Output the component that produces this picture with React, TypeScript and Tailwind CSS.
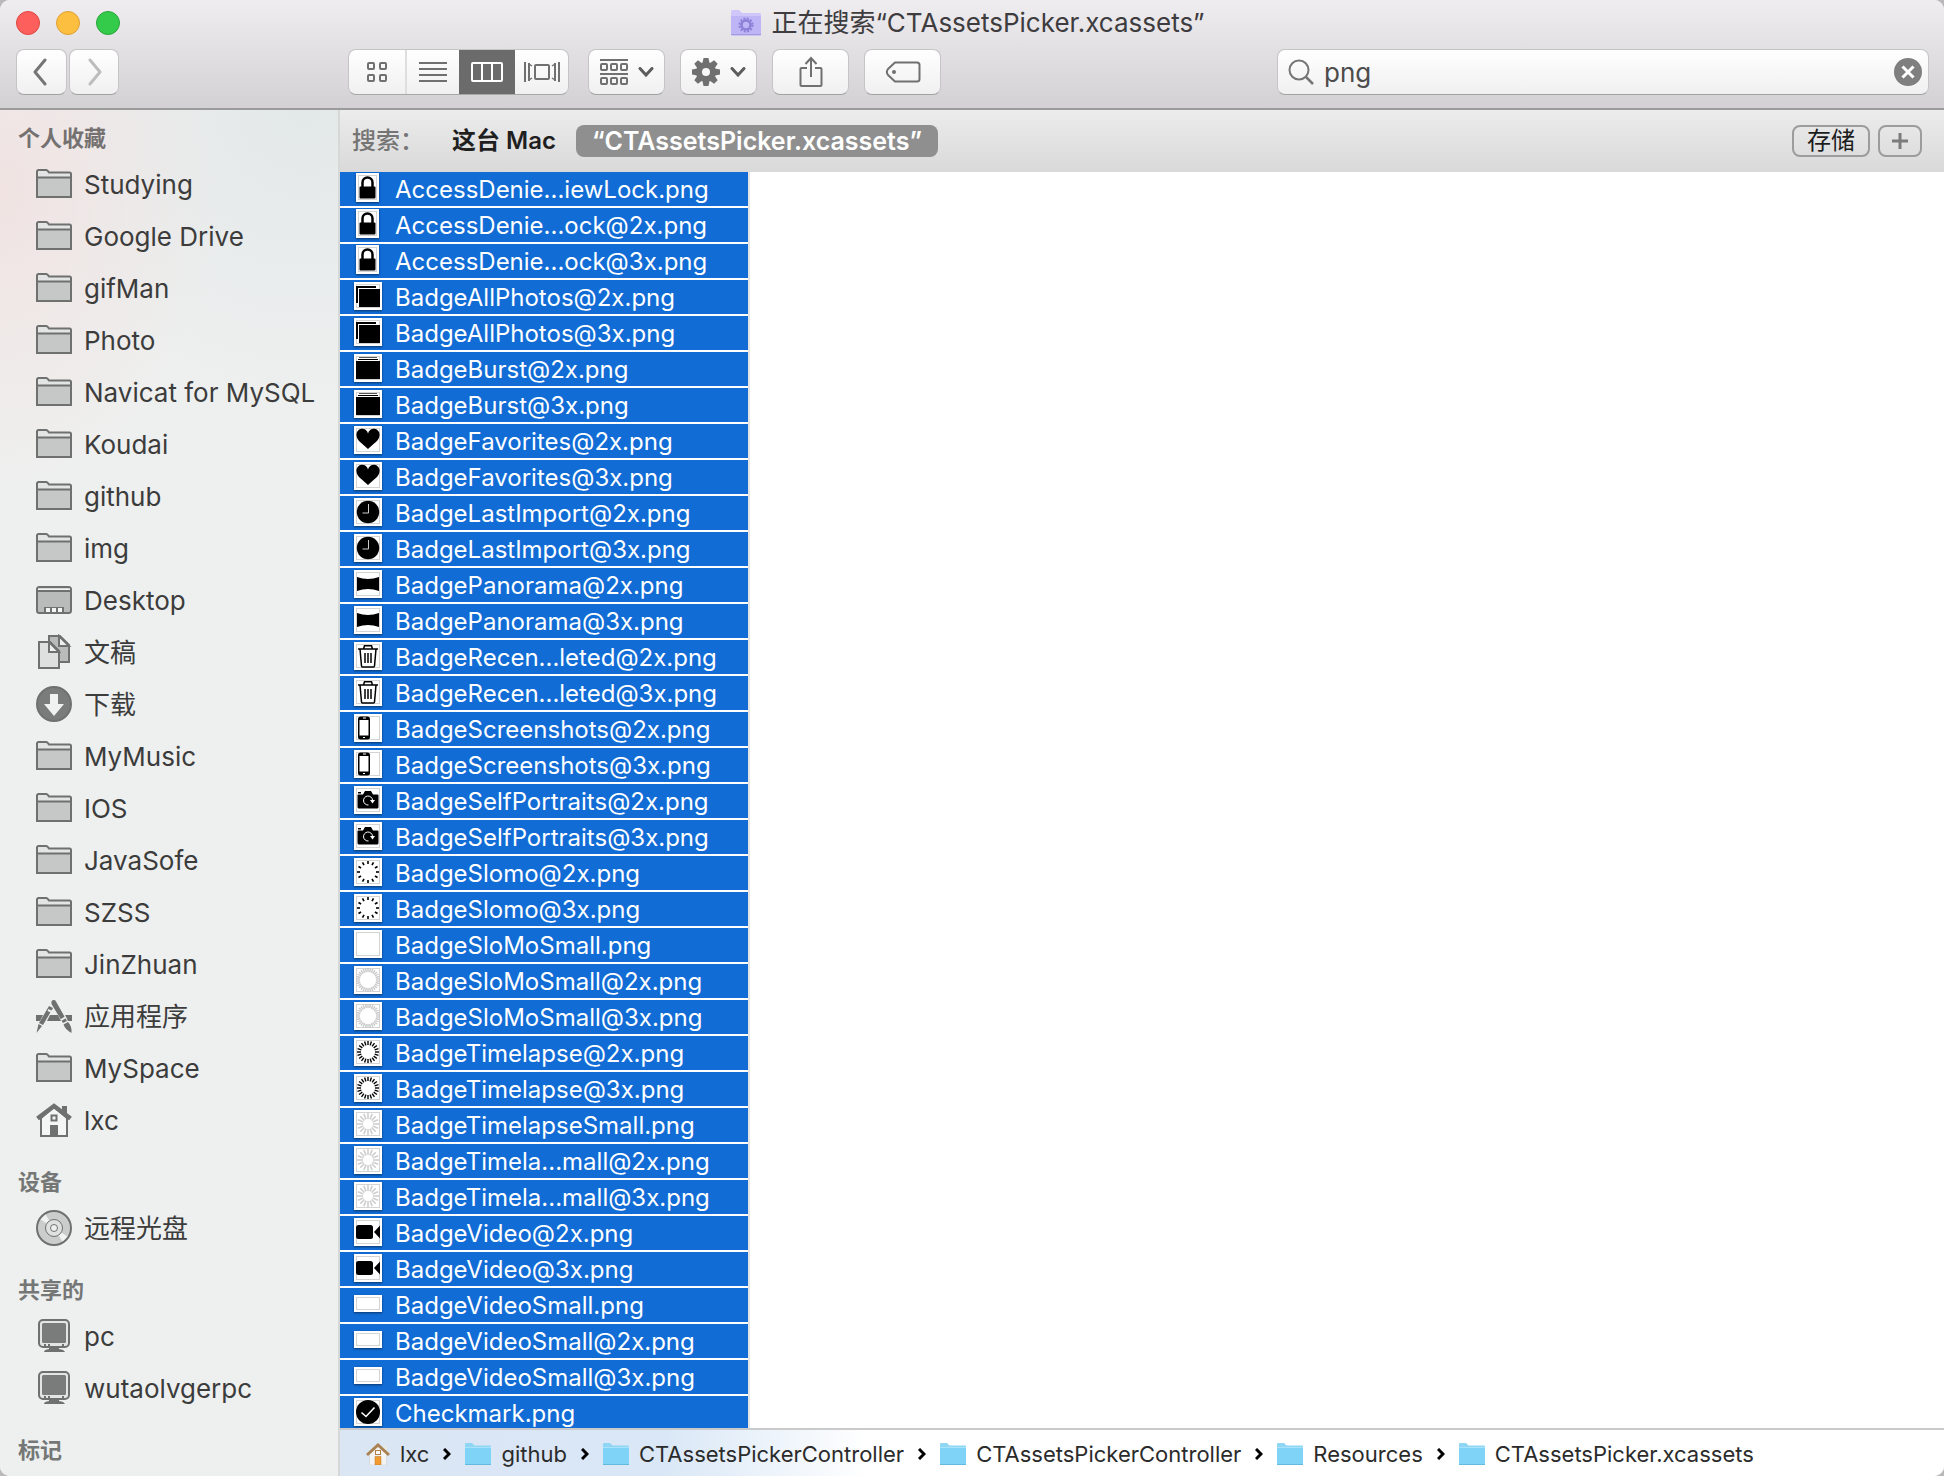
import { ReactNode } from "react";

type IconName =
  | "folder"
  | "desktop"
  | "documents"
  | "downloads"
  | "apps"
  | "home"
  | "disc"
  | "computer";

type ThumbKind =
  | "lock"
  | "allPhotos"
  | "burst"
  | "heart"
  | "clock"
  | "panorama"
  | "trash"
  | "phone"
  | "camera"
  | "slomo"
  | "blank"
  | "slomoSmall"
  | "timelapse"
  | "timelapseSmall"
  | "video"
  | "videoSmall"
  | "check";

const favorites: [string, IconName][] = [
  ["Studying", "folder"],
  ["Google Drive", "folder"],
  ["gifMan", "folder"],
  ["Photo", "folder"],
  ["Navicat for MySQL", "folder"],
  ["Koudai", "folder"],
  ["github", "folder"],
  ["img", "folder"],
  ["Desktop", "desktop"],
  ["文稿", "documents"],
  ["下载", "downloads"],
  ["MyMusic", "folder"],
  ["IOS", "folder"],
  ["JavaSofe", "folder"],
  ["SZSS", "folder"],
  ["JinZhuan", "folder"],
  ["应用程序", "apps"],
  ["MySpace", "folder"],
  ["lxc", "home"],
];

const devices: [string, IconName][] = [["远程光盘", "disc"]];

const shared: [string, IconName][] = [
  ["pc", "computer"],
  ["wutaolvgerpc", "computer"],
];

const files: [string, ThumbKind][] = [
  ["AccessDenie...iewLock.png", "lock"],
  ["AccessDenie...ock@2x.png", "lock"],
  ["AccessDenie...ock@3x.png", "lock"],
  ["BadgeAllPhotos@2x.png", "allPhotos"],
  ["BadgeAllPhotos@3x.png", "allPhotos"],
  ["BadgeBurst@2x.png", "burst"],
  ["BadgeBurst@3x.png", "burst"],
  ["BadgeFavorites@2x.png", "heart"],
  ["BadgeFavorites@3x.png", "heart"],
  ["BadgeLastImport@2x.png", "clock"],
  ["BadgeLastImport@3x.png", "clock"],
  ["BadgePanorama@2x.png", "panorama"],
  ["BadgePanorama@3x.png", "panorama"],
  ["BadgeRecen...leted@2x.png", "trash"],
  ["BadgeRecen...leted@3x.png", "trash"],
  ["BadgeScreenshots@2x.png", "phone"],
  ["BadgeScreenshots@3x.png", "phone"],
  ["BadgeSelfPortraits@2x.png", "camera"],
  ["BadgeSelfPortraits@3x.png", "camera"],
  ["BadgeSlomo@2x.png", "slomo"],
  ["BadgeSlomo@3x.png", "slomo"],
  ["BadgeSloMoSmall.png", "blank"],
  ["BadgeSloMoSmall@2x.png", "slomoSmall"],
  ["BadgeSloMoSmall@3x.png", "slomoSmall"],
  ["BadgeTimelapse@2x.png", "timelapse"],
  ["BadgeTimelapse@3x.png", "timelapse"],
  ["BadgeTimelapseSmall.png", "timelapseSmall"],
  ["BadgeTimela...mall@2x.png", "timelapseSmall"],
  ["BadgeTimela...mall@3x.png", "timelapseSmall"],
  ["BadgeVideo@2x.png", "video"],
  ["BadgeVideo@3x.png", "video"],
  ["BadgeVideoSmall.png", "videoSmall"],
  ["BadgeVideoSmall@2x.png", "videoSmall"],
  ["BadgeVideoSmall@3x.png", "videoSmall"],
  ["Checkmark.png", "check"],
];

const path = [
  "lxc",
  "github",
  "CTAssetsPickerController",
  "CTAssetsPickerController",
  "Resources",
  "CTAssetsPicker.xcassets",
];

export default function App() {
  return (
    <div className="h-screen bg-[#b9b9b9] font-['Inter','Noto_Sans_CJK_SC',sans-serif] text-[#3c3c3c]">
      <div className="flex h-full flex-col overflow-hidden rounded-[10px] bg-white">
        <Toolbar />
        <div className="flex min-h-0 flex-1">
          <Sidebar />
          <main className="flex min-w-0 flex-1 flex-col">
            <ScopeBar />
            <ul
              role="listbox"
              aria-multiselectable="true"
              aria-label="CTAssetsPicker.xcassets"
              className="min-h-0 w-[410px] flex-1 overflow-hidden border-r-2 border-[#e4e4e4]"
            >
              {files.map(([name, kind]) => (
                <li
                  key={name}
                  role="option"
                  aria-selected="true"
                  className="flex h-9 items-start border-b-2 border-white bg-[#116cd6] pl-3.5 text-2xl text-white"
                >
                  <Thumb kind={kind} />
                  <span className="ml-[13px] leading-9">{name}</span>
                </li>
              ))}
            </ul>
            <PathBar />
          </main>
        </div>
      </div>
    </div>
  );
}

const Toolbar = () => (
  <header className="shrink-0 border-b-2 border-[#9b9b9b] bg-linear-to-b from-[#efedf0] to-[#d3d1d4]">
    <div className="grid h-[45px] grid-cols-[1fr_auto_1fr] items-center px-4">
      <div className="flex gap-4">
        <button aria-label="关闭" className="size-6 rounded-full border border-[#e0443e] bg-[#fd605c]" />
        <button aria-label="最小化" className="size-6 rounded-full border border-[#dfa034] bg-[#fdbf40]" />
        <button aria-label="缩放" className="size-6 rounded-full border border-[#27a63a] bg-[#34ca4a]" />
      </div>
      <h1 className="flex items-center gap-2.5 pr-2 text-[26px] text-[#3e3c3f]">
        <SmartFolder />
        正在搜索“CTAssetsPicker.xcassets”
      </h1>
    </div>
    <div className="flex items-start pt-1 pr-[15px] pb-[13px] pl-4">
      <div className="flex gap-0.5">
        <ToolButton label="后退" className="w-[51px] pr-1">
          <svg className="h-7 w-4" viewBox="0 0 16 28" fill="none" stroke="#757575" strokeWidth="3">
            <path d="M13 2 3 14l10 12" strokeLinecap="round" strokeLinejoin="round" />
          </svg>
        </ToolButton>
        <ToolButton label="前进" className="w-[50px] pl-0.5">
          <svg className="h-7 w-4" viewBox="0 0 16 28" fill="none" stroke="#bdbdbd" strokeWidth="3">
            <path d="M3 2l10 12L3 26" strokeLinecap="round" strokeLinejoin="round" />
          </svg>
        </ToolButton>
      </div>
      <div className="ml-[229px] flex h-[46px] overflow-hidden rounded-lg border border-[#c6c4c7] border-b-[#a9a7aa] bg-linear-to-b from-white to-[#f0f0f0]">
        <button aria-label="图标" className="flex w-[58px] items-center justify-center border-r-2 border-[#dedede]">
          <svg className="size-5" viewBox="0 0 20 20" fill="none" stroke="#707070" strokeWidth="2">
            <rect x="1" y="1" width="6" height="6" rx="1" />
            <rect x="13" y="1" width="6" height="6" rx="1" />
            <rect x="1" y="13" width="6" height="6" rx="1" />
            <rect x="13" y="13" width="6" height="6" rx="1" />
          </svg>
        </button>
        <button aria-label="列表" className="flex w-[52px] items-center justify-center">
          <svg className="h-5 w-7" viewBox="0 0 28 20" stroke="#707070" strokeWidth="2">
            <path d="M0 1h28M0 7h28M0 13h28M0 19h28" />
          </svg>
        </button>
        <button aria-label="分栏" aria-pressed="true" className="flex w-14 items-center justify-center bg-[#6b6b6b]">
          <svg className="h-5 w-8" viewBox="0 0 32 20" fill="none" stroke="white" strokeWidth="2">
            <rect x="1" y="1" width="30" height="18" rx="1" />
            <path d="M11 1v18M21 1v18" />
          </svg>
        </button>
        <button aria-label="封面" className="flex w-[53px] items-center justify-center">
          <svg className="h-5 w-9" viewBox="0 0 36 20" fill="none" stroke="#707070" strokeWidth="2">
            <rect x="11" y="3" width="14" height="14" rx="1" />
            <path d="M1 0v20M35 0v20" />
            <path d="M5 1v18M31 1v18" />
            <path d="M5 2l3 2M5 18l3-2M31 2l-3 2M31 18l-3-2" strokeWidth="1.5" />
          </svg>
        </button>
      </div>
      <ToolButton label="排列" className="ml-[19px] w-[77px] gap-2.5">
        <svg className="h-[26px] w-7" viewBox="0 0 28 26" fill="none" stroke="#707070" strokeWidth="2">
          <path d="M0 1h28M0 15h28" />
          {[1, 11, 21].map((x) => (
            <g key={x}>
              <rect x={x} y="5" width="6" height="6" rx="1" />
              <rect x={x} y="19" width="6" height="6" rx="1" />
            </g>
          ))}
        </svg>
        <DownChevron />
      </ToolButton>
      <ToolButton label="操作" className="ml-[15px] w-[77px] gap-2.5">
        <Gear />
        <DownChevron />
      </ToolButton>
      <ToolButton label="共享" className="ml-[15px] w-[77px]">
        <svg className="h-8 w-6" viewBox="0 0 24 32" fill="none" stroke="#707070" strokeWidth="2">
          <path d="M8 12H2.500a1 1 0 0 0-1 1v16a1 1 0 0 0 1 1h19a1 1 0 0 0 1-1V13a1 1 0 0 0-1-1H16" />
          <path d="M12 21V2M6.500 8 12 2l5.500 6" />
        </svg>
      </ToolButton>
      <ToolButton label="标记" className="ml-[15px] w-[77px]">
        <svg className="h-[22px] w-9" viewBox="0 0 36 22" fill="none" stroke="#707070" strokeWidth="2">
          <path d="M10 1.500h22a2.500 2.500 0 0 1 2.500 2.500v14a2.500 2.500 0 0 1-2.500 2.500H10L3 14a5 5 0 0 1 0-6z" strokeLinejoin="round" />
          <circle cx="9" cy="11" r="2" fill="#707070" stroke="none" />
        </svg>
      </ToolButton>
      <label className="ml-auto flex h-[46px] w-[652px] items-center gap-2.5 rounded-lg border border-[#c6c4c7] border-b-[#a3a1a4] bg-linear-to-b from-white to-[#f0f0f0] pr-1.5 pl-2.5">
        <svg className="size-[26px]" viewBox="0 0 26 26" fill="none" stroke="#757575" strokeWidth="2">
          <circle cx="11" cy="11" r="9.500" />
          <path d="M18 18l7 7" strokeWidth="2.500" />
        </svg>
        <input aria-label="搜索" defaultValue="png" className="min-w-0 flex-1 bg-transparent text-[26px] text-[#4c4c4c] outline-none" />
        <button aria-label="清除">
          <svg className="size-7" viewBox="0 0 28 28">
            <circle cx="14" cy="14" r="14" fill="#7f7f7f" />
            <path d="M8.500 8.500l11 11M19.500 8.500l-11 11" stroke="white" strokeWidth="3" />
          </svg>
        </button>
      </label>
    </div>
  </header>
);

const ToolButton = ({
  label,
  className,
  children,
}: {
  label: string;
  className: string;
  children: ReactNode;
}) => (
  <button
    aria-label={label}
    className={`flex h-[46px] items-center justify-center rounded-lg border border-[#c6c4c7] border-b-[#a3a1a4] bg-linear-to-b from-white to-[#f0f0f0] ${className}`}
  >
    {children}
  </button>
);

const DownChevron = () => (
  <svg className="h-2.5 w-4" viewBox="0 0 16 10" fill="none" stroke="#5c5c5c" strokeWidth="3">
    <path d="M2 1.500l6 6.500 6-6.500" strokeLinecap="round" />
  </svg>
);

const Gear = () => (
  <svg className="size-7" viewBox="0 0 28 28" fill="#707070">
    {[0, 45, 90, 135].map((a) => (
      <path key={a} d="M11.500 0h5l1 5v18l-1 5h-5l-1-5V5z" transform={`rotate(${a} 14 14)`} />
    ))}
    <circle cx="14" cy="14" r="10" />
    <circle cx="14" cy="14" r="4" fill="#f7f7f7" />
  </svg>
);

const SmartFolder = () => (
  <svg className="h-[26px] w-[30px]" viewBox="0 0 30 26">
    <path d="M0 1.500A1.500 1.500 0 0 1 1.500 0H8l3 3h17.500A1.500 1.500 0 0 1 30 4.500V24a1.500 1.500 0 0 1-1.500 1.500h-27A1.500 1.500 0 0 1 0 24z" fill="#cfc6fa" />
    <path d="M0 6h30v18.500a1 1 0 0 1-1 1H1a1 1 0 0 1-1-1z" fill="#bdb5f5" />
    <path d="M0 24.500h30" stroke="#a39be0" />
    <circle cx="15" cy="15" r="6.500" fill="none" stroke="#8a80d8" strokeWidth="2" strokeDasharray="2 1.400" />
    <circle cx="15" cy="15" r="4.500" fill="none" stroke="#8a80d8" strokeWidth="2.500" />
  </svg>
);

const Sidebar = () => (
  <nav
    aria-label="边栏"
    className="w-[340px] shrink-0 overflow-hidden border-r-2 border-[#d6d8d8] bg-[#eef0ef] bg-[radial-gradient(ellipse_220px_300px_at_0%_6%,#f0e3e2,transparent),radial-gradient(ellipse_300px_300px_at_90%_0%,#e3e8e9,transparent)]"
  >
    <h2 className="flex h-12 items-end px-[18px] pb-1.5 text-[22px] leading-7 font-bold text-[#757171]">
      个人收藏
    </h2>
    <SidebarList items={favorites} />
    <SidebarHeading>设备</SidebarHeading>
    <SidebarList items={devices} />
    <SidebarHeading>共享的</SidebarHeading>
    <SidebarList items={shared} />
    <SidebarHeading>标记</SidebarHeading>
  </nav>
);

const SidebarHeading = ({ children }: { children: ReactNode }) => (
  <h2 className="flex h-14 items-end px-[18px] pb-1.5 text-[22px] leading-7 font-bold text-[#757777]">
    {children}
  </h2>
);

const SidebarList = ({ items }: { items: [string, IconName][] }) => (
  <ul>
    {items.map(([name, icon]) => (
      <li key={name}>
        <a href="#" className="flex h-[52px] items-center gap-3 pl-9 text-[26px] whitespace-nowrap">
          <SidebarIcon name={icon} />
          {name}
        </a>
      </li>
    ))}
  </ul>
);

const SidebarIcon = ({ name }: { name: IconName }) => (
  <svg className="size-9 shrink-0" viewBox="0 0 36 36" fill="none" stroke="#6f7170" strokeWidth="2">
    {name === "folder" && (
      <>
        <path d="M1 31V5.500A1.500 1.500 0 0 1 2.500 4h7.500a2 2 0 0 1 1.500.700L13 6.500h20.500A1.500 1.500 0 0 1 35 8v23z" fill="#e3e4e4" />
        <path d="M1 11.500h34V30a1 1 0 0 1-1 1H2a1 1 0 0 1-1-1z" fill="#c6c7c7" />
      </>
    )}
    {name === "desktop" && (
      <>
        <rect x="1" y="5" width="34" height="26" rx="2.500" fill="#b9bbba" />
        <path d="M2 6.500h32v2H2z" fill="#f4f4f4" stroke="none" />
        <path d="M1 9h34" />
        <path d="M8 25h20v6H8z" fill="#707271" stroke="none" />
        <path d="M10 26h4v4h-4zM16 26h4v4h-4zM22 26h4v4h-4z" fill="#f4f4f4" stroke="none" />
      </>
    )}
    {name === "documents" && (
      <>
        <path d="M13 2h11l9 9v17H13z" fill="#b9bbba" />
        <path d="M23 2v10h10z" fill="#eef0ef" />
        <path d="M3 8h11l9 9v17H3z" fill="#dedfdf" />
        <path d="M13 8v10h10z" fill="#eef0ef" />
      </>
    )}
    {name === "downloads" && (
      <>
        <circle cx="18" cy="18" r="17" fill="#7a7c7b" />
        <path d="M14 8h8v10h6L18 30 8 18h6z" fill="#f0f1f1" stroke="none" />
      </>
    )}
    {name === "apps" && (
      <g fill="#6f7170" stroke="none">
        <path d="M0 17h7l-3 6H0zM14 17h8l3 6H11zM29 17h7v6h-4z" />
        <path d="M15.500 3.500a2.500 2.500 0 0 1 4.500 0L31 23l-4 2L15.500 6z" />
        <path d="M13 8l4 2-10 17-4-2z" />
        <path d="M2.500 26l3.500 2-5.500 7zM27.500 26.500l4.500-2.500q4 4 3.500 11-6-3-8-8.500z" />
        <path d="M12 12l4 2M25 22l5-3" stroke="#eef0ef" />
      </g>
    )}
    {name === "home" && (
      <>
        <path d="M5 16v18h26V16L18 5z" fill="#f4f5f5" />
        <path d="M26 4h5v10l-5-4z" fill="#6f7170" stroke="none" />
        <path d="M1.500 16.500 18 4l16.500 12.500" strokeWidth="4.500" />
        <rect x="15.500" y="13.500" width="5" height="5" />
        <path d="M14 23h8v11h-8z" fill="#6f7170" stroke="none" />
      </>
    )}
    {name === "disc" && (
      <>
        <circle cx="18" cy="18" r="17" fill="#cbcccc" />
        <path d="M18 18 4.500 9.500 9.500 4.500zM18 18l13.500 8.500-5 5z" fill="#f2f2f2" stroke="none" />
        <circle cx="18" cy="18" r="8.500" fill="#dfe0e0" strokeWidth="1" />
        <circle cx="18" cy="18" r="3.500" fill="#eef0ef" strokeWidth="1" />
      </>
    )}
    {name === "computer" && (
      <>
        <rect x="3" y="2" width="30" height="27" rx="4" fill="#e3e5e4" />
        <rect x="6" y="5" width="24" height="20" rx="1.500" fill="#7a7c7b" stroke="none" />
        <path d="M8 27h2M12 27h2M26 27h2" />
        <path d="M13 29h10v2q5 .5 6 3H8q0-2.500 5-3z" fill="#6f7170" stroke="none" />
      </>
    )}
  </svg>
);

const ScopeBar = () => (
  <div className="flex h-[62px] shrink-0 items-center bg-linear-to-b from-[#ececec] to-[#d9d9d9] pr-[22px] pl-3 text-2xl">
    <span className="font-medium text-[#757575]">搜索：</span>
    <button className="ml-7 font-semibold text-[#1f1f1f]">这台 Mac</button>
    <button className="ml-5 h-8 rounded-lg bg-[#8f8f8f] px-4 text-[25px] leading-8 font-semibold text-white">
      “CTAssetsPicker.xcassets”
    </button>
    <button className="ml-auto h-8 w-[78px] rounded-lg border-2 border-[#9c9c9c] leading-7 text-[#1c1c1c]">
      存储
    </button>
    <button aria-label="添加条件" className="ml-2 flex h-8 w-11 items-center justify-center rounded-lg border-2 border-[#9c9c9c]">
      <svg className="size-4" viewBox="0 0 16 16" stroke="#7c7c7c" strokeWidth="3">
        <path d="M8 0v16M0 8h16" />
      </svg>
    </button>
  </div>
);

// spokes around the centre of a 24x24 thumbnail
const Spokes = ({
  count,
  from,
  to,
  color,
  width,
}: {
  count: number;
  from: number;
  to: number;
  color: string;
  width: number;
}) => (
  <g stroke={color} strokeWidth={width}>
    {Array.from({ length: count }, (_, i) => (
      <path key={i} d={`M12 ${12 - from}V${12 - to}`} transform={`rotate(${(i * 360) / count} 12 12)`} />
    ))}
  </g>
);

const Thumb = ({ kind }: { kind: ThumbKind }) => {
  if (kind === "lock") {
    return (
      <span className="mt-px mr-[3px] ml-0.5 block h-[29px] w-[23px] shrink-0 bg-white p-0.5 shadow-[0_1px_2px_rgba(0,0,0,0.5)]">
        <svg className="h-[25px] w-[19px]" viewBox="0 0 19 25">
          <rect x="0.500" y="0.500" width="18" height="24" fill="none" stroke="#d4d4d4" />
          <path d="M4.500 12V7.500a5 5 0 0 1 10 0V12" fill="none" stroke="black" strokeWidth="2.500" />
          <rect x="1.500" y="11.500" width="16" height="12" rx="1" />
        </svg>
      </span>
    );
  }
  if (kind === "videoSmall") {
    return (
      <span className="mt-[7px] block h-[17px] w-7 shrink-0 bg-white p-0.5 shadow-[0_1px_2px_rgba(0,0,0,0.5)]">
        <span className="block h-full border border-[#d4d4d4]" />
      </span>
    );
  }
  return (
    <span className="mt-0.5 block size-7 shrink-0 bg-white p-0.5 shadow-[0_1px_2px_rgba(0,0,0,0.5)]">
      <svg className="size-6" viewBox="0 0 24 24">
        <rect x="0.500" y="0.500" width="23" height="23" fill="none" stroke="#d4d4d4" />
        {kind === "allPhotos" && (
          <>
            <path d="M0 2h20v2H2v15H0z" />
            <path d="M3 5h21v18H3z" />
          </>
        )}
        {kind === "burst" && (
          <>
            <path d="M3 1h18v1H3z" fill="#555" />
            <path d="M2 3h20v1H2zM0 5h24v18H0z" />
          </>
        )}
        {kind === "heart" && (
          <path d="M12 21C7 16 .5 12.500.5 7.500a5.800 5.800 0 0 1 11.500-2 5.800 5.800 0 0 1 11.500 2c0 5-6.500 8.500-11.500 13.500z" />
        )}
        {kind === "clock" && (
          <>
            <circle cx="12" cy="12" r="11.200" />
            <path d="M12.500 4v9H6.500" fill="none" stroke="#ccc" />
          </>
        )}
        {kind === "panorama" && <path d="M1 5q11 4 22 0v14q-11-4-22 0z" />}
        {kind === "trash" && (
          <g fill="none" stroke="black" strokeWidth="1.500">
            <path d="M2 5h20M7.500 5l1-3.200h7L16.500 5M4 5l1.500 17q.1 1 1 1h11q.9 0 1-1L20 5" />
            <path d="M9 9v10M12 9v10M15 9v10" />
          </g>
        )}
        {kind === "phone" && (
          <>
            <rect x="2" y="0.500" width="12" height="23" rx="2.500" />
            <path d="M3.500 4h9v15.500h-9z" fill="white" />
            <path d="M7 21.500h2M7 2h3" stroke="white" />
          </>
        )}
        {kind === "camera" && (
          <>
            <path d="M2 6.500h5L9 3h6l2 3.500h4.500a1 1 0 0 1 1 1V19a1.500 1.500 0 0 1-1.500 1.500H3A1.500 1.500 0 0 1 1.500 19V7zM2 4h3v1.500H2z" />
            <path d="M12.500 17A4.500 4.500 0 1 1 16.500 12" fill="none" stroke="white" />
            <path d="M14 12h5l-2.500 3.500z" fill="white" />
          </>
        )}
        {kind === "slomo" && <Spokes count={12} from={8} to={11} color="black" width={1.6} />}
        {kind === "slomoSmall" && <Spokes count={30} from={8} to={12} color="#c9c9c9" width={1.4} />}
        {kind === "timelapse" && <Spokes count={20} from={7} to={11} color="black" width={1.4} />}
        {kind === "timelapseSmall" && <Spokes count={16} from={5} to={11} color="#cfcfcf" width={1.6} />}
        {kind === "video" && (
          <>
            <rect x="0" y="5" width="17" height="14" rx="2.500" />
            <path d="M18 12l6-6.500v13z" />
          </>
        )}
        {kind === "check" && (
          <>
            <circle cx="12" cy="12" r="12" />
            <path d="M5.500 12.500l4.500 4 8.500-9" fill="none" stroke="white" strokeWidth="1.600" />
          </>
        )}
      </svg>
    </span>
  );
};

const PathBar = () => (
  <nav
    aria-label="路径"
    className="flex h-12 shrink-0 items-center gap-3.5 border-t-2 border-[#cacaca] bg-linear-to-r from-[#dbe6f5] from-5% via-[#d9e7f6] via-20% to-white to-33% pt-0.5 pl-[26px] text-[22px] whitespace-nowrap text-[#2b2b2b]"
  >
    {path.map((name, i) => (
      <a key={i} href="#" className="flex items-center gap-2.5">
        {i > 0 && (
          <svg className="mr-1 h-3 w-2" viewBox="0 0 8 12" fill="none" stroke="black" strokeWidth="3">
            <path d="M1 1l5 5-5 5" />
          </svg>
        )}
        {i === 0 ? <PathHome /> : <PathFolder />}
        {name}
      </a>
    ))}
  </nav>
);

const PathHome = () => (
  <svg className="h-[22px] w-6" viewBox="0 0 24 22">
    <path d="M18 2h3v7h-3z" fill="#e8e8e8" />
    <path d="M3.500 10.500 12 3l8.500 7.500V22h-17z" fill="#f3f3f3" stroke="#c9c9c9" strokeWidth="0.500" />
    <path d="M1 12 12 2l11 10" fill="none" stroke="#a98152" strokeWidth="3" />
    <rect x="9.500" y="7.500" width="5" height="4" fill="white" stroke="#b07f46" />
    <path d="M9 13.500h6V22H9z" fill="#f29a2e" stroke="#b9752a" strokeWidth="0.500" />
  </svg>
);

const PathFolder = () => (
  <svg className="h-[22px] w-[26px]" viewBox="0 0 26 22">
    <path d="M0 1a1 1 0 0 1 1-1h6l2.500 2.500H25a1 1 0 0 1 1 1V21H0z" fill="#8fd6f5" />
    <path d="M0 5h26v16a1 1 0 0 1-1 1H1a1 1 0 0 1-1-1z" fill="#7fd3f7" />
    <path d="M0 4.500h26" stroke="#a9e2fb" />
    <path d="M0 21.500h26" stroke="#63b9de" />
  </svg>
);
